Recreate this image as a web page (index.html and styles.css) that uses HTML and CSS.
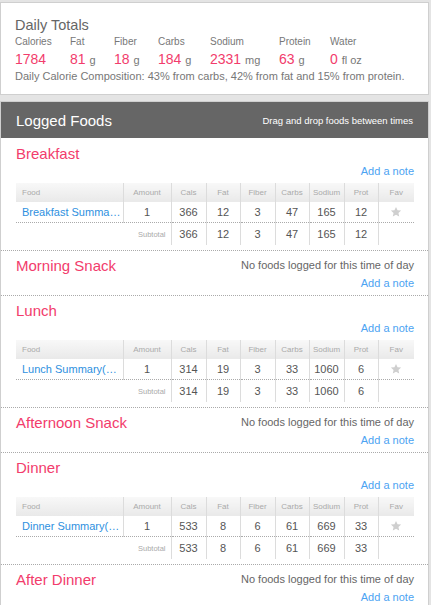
FILE: index.html
```html
<!DOCTYPE html>
<html>
<head>
<meta charset="utf-8">
<link rel="stylesheet" href="styles.css">
</head>
<body>
<div class="panel totals">
  <div class="totals-title">Daily Totals</div>
  <div class="totals-grid">
    <div class="lbl">Calories</div><div class="lbl">Fat</div><div class="lbl">Fiber</div><div class="lbl">Carbs</div><div class="lbl">Sodium</div><div class="lbl">Protein</div><div class="lbl">Water</div>
    <div class="val">1784</div>
    <div class="val">81 <span class="unit">g</span></div>
    <div class="val">18 <span class="unit">g</span></div>
    <div class="val">184 <span class="unit">g</span></div>
    <div class="val">2331 <span class="unit">mg</span></div>
    <div class="val">63 <span class="unit">g</span></div>
    <div class="val">0 <span class="unit">fl oz</span></div>
  </div>
  <div class="composition">Daily Calorie Composition: 43% from carbs, 42% from fat and 15% from protein.</div>
</div>

<div class="panel logged">
  <div class="logged-head">
    <span class="logged-title">Logged Foods</span>
    <span class="logged-hint">Drag and drop foods between times</span>
  </div>

  <div class="meal first">
    <div class="meal-row"><span class="meal-name">Breakfast</span></div>
    <div class="note">Add a note</div>
    <table class="foods">
      <colgroup><col class="c-food"><col class="c-amt"><col class="c-n"><col class="c-n2"><col class="c-n"><col class="c-n2"><col class="c-n"><col class="c-n2"><col class="c-fav"></colgroup>
      <tr class="hd"><th class="food">Food</th><th>Amount</th><th>Cals</th><th>Fat</th><th>Fiber</th><th>Carbs</th><th>Sodium</th><th>Prot</th><th>Fav</th></tr>
      <tr class="item"><td class="food"><span class="fname">Breakfast Summa…</span></td><td>1</td><td>366</td><td>12</td><td>3</td><td>47</td><td>165</td><td>12</td><td><svg class="star" viewBox="0 0 24 24"><path d="M12 1.8l3.1 6.6 7.2.8-5.4 4.9 1.5 7.1L12 17.6l-6.4 3.6 1.5-7.1-5.4-4.9 7.2-.8z"/></svg></td></tr>
      <tr class="sub"><td class="blank"></td><td class="sublbl">Subtotal</td><td>366</td><td>12</td><td>3</td><td>47</td><td>165</td><td>12</td><td></td></tr>
    </table>
  </div>

  <div class="meal empty">
    <div class="meal-row"><span class="meal-name">Morning Snack</span><span class="none">No foods logged for this time of day</span></div>
    <div class="note">Add a note</div>
  </div>

  <div class="meal">
    <div class="meal-row"><span class="meal-name">Lunch</span></div>
    <div class="note">Add a note</div>
    <table class="foods">
      <colgroup><col class="c-food"><col class="c-amt"><col class="c-n"><col class="c-n2"><col class="c-n"><col class="c-n2"><col class="c-n"><col class="c-n2"><col class="c-fav"></colgroup>
      <tr class="hd"><th class="food">Food</th><th>Amount</th><th>Cals</th><th>Fat</th><th>Fiber</th><th>Carbs</th><th>Sodium</th><th>Prot</th><th>Fav</th></tr>
      <tr class="item"><td class="food"><span class="fname">Lunch Summary(…</span></td><td>1</td><td>314</td><td>19</td><td>3</td><td>33</td><td>1060</td><td>6</td><td><svg class="star" viewBox="0 0 24 24"><path d="M12 1.8l3.1 6.6 7.2.8-5.4 4.9 1.5 7.1L12 17.6l-6.4 3.6 1.5-7.1-5.4-4.9 7.2-.8z"/></svg></td></tr>
      <tr class="sub"><td class="blank"></td><td class="sublbl">Subtotal</td><td>314</td><td>19</td><td>3</td><td>33</td><td>1060</td><td>6</td><td></td></tr>
    </table>
  </div>

  <div class="meal empty">
    <div class="meal-row"><span class="meal-name">Afternoon Snack</span><span class="none">No foods logged for this time of day</span></div>
    <div class="note">Add a note</div>
  </div>

  <div class="meal">
    <div class="meal-row"><span class="meal-name">Dinner</span></div>
    <div class="note">Add a note</div>
    <table class="foods">
      <colgroup><col class="c-food"><col class="c-amt"><col class="c-n"><col class="c-n2"><col class="c-n"><col class="c-n2"><col class="c-n"><col class="c-n2"><col class="c-fav"></colgroup>
      <tr class="hd"><th class="food">Food</th><th>Amount</th><th>Cals</th><th>Fat</th><th>Fiber</th><th>Carbs</th><th>Sodium</th><th>Prot</th><th>Fav</th></tr>
      <tr class="item"><td class="food"><span class="fname">Dinner Summary(…</span></td><td>1</td><td>533</td><td>8</td><td>6</td><td>61</td><td>669</td><td>33</td><td><svg class="star" viewBox="0 0 24 24"><path d="M12 1.8l3.1 6.6 7.2.8-5.4 4.9 1.5 7.1L12 17.6l-6.4 3.6 1.5-7.1-5.4-4.9 7.2-.8z"/></svg></td></tr>
      <tr class="sub"><td class="blank"></td><td class="sublbl">Subtotal</td><td>533</td><td>8</td><td>6</td><td>61</td><td>669</td><td>33</td><td></td></tr>
    </table>
  </div>

  <div class="meal empty">
    <div class="meal-row"><span class="meal-name">After Dinner</span><span class="none">No foods logged for this time of day</span></div>
    <div class="note">Add a note</div>
  </div>
</div>
</body>
</html>
```

FILE: styles.css
```css
html, body {
  margin: 0;
  padding: 0;
}
body {
  background: #e4e4e4;
  font-family: "Liberation Sans", Arial, sans-serif;
  color: #666;
  padding-top: 2px;
  overflow: hidden;
}
.panel {
  background: #fff;
  border: 1px solid #cfcfcf;
  margin-right: 2px;
}
.totals {
  padding: 13px 14px 11px 14px;
}
.totals-title {
  font-size: 14.5px;
  line-height: 19px;
  color: #666;
}
.totals-grid {
  display: grid;
  grid-template-columns: 55px 44px 44px 52px 69px 51px auto;
}
.lbl {
  font-size: 10px;
  line-height: 14px;
  color: #777;
}
.val {
  font-size: 14px;
  line-height: 18px;
  color: #f23c6c;
  margin-top: 1px;
  white-space: nowrap;
}
.unit {
  font-size: 11px;
  color: #777;
}
.composition {
  font-size: 11px;
  line-height: 14px;
  color: #777;
}
.logged {
  margin-top: 6px;
}
.logged-head {
  background: #666;
  height: 36px;
  display: flex;
  align-items: center;
  justify-content: space-between;
  padding: 0 15px 0 15px;
}
.logged-title {
  color: #fff;
  font-size: 15px;
}
.logged-hint {
  color: #fff;
  font-size: 9.5px;
}
.meal {
  padding: 4px 14px 5px 15px;
  border-top: 1px dotted #aaa;
}
.meal.first {
  border-top: none;
  padding-top: 5px;
}
.meal.empty {
  padding-bottom: 4px;
}
.meal-row {
  display: flex;
  justify-content: space-between;
  align-items: center;
  height: 20px;
}
.meal-name {
  font-size: 15px;
  color: #f23c6c;
}
.none {
  font-size: 11px;
  color: #666;
}
.note {
  text-align: right;
  font-size: 11px;
  line-height: 16px;
  color: #4ca3f2;
}
.foods {
  margin-top: 4px;
  width: 398px;
  border-collapse: collapse;
  table-layout: fixed;
}
.c-food { width: 107px; }
.c-amt { width: 48px; }
.c-n { width: 35px; }
.c-n2 { width: 34px; }
.c-fav { width: 36px; }
.foods th {
  height: 19px;
  padding: 0;
  font-size: 8px;
  font-weight: normal;
  color: #aaa;
  text-align: center;
  background: linear-gradient(#f8f8f8, #e9e9e9);
  border-left: 1px solid #dcdcdc;
}
.foods th.food {
  text-align: left;
  padding-left: 6px;
  border-left: none;
}
.foods td {
  padding: 0;
  font-size: 11px;
  color: #555;
  text-align: center;
  border-left: 1px solid #dcdcdc;
}
.item td {
  height: 20px;
  border-bottom: 1px dotted #aaa;
}
.item td.food {
  text-align: left;
  padding-left: 6px;
  border-left: none;
  border-right: 1px solid #dcdcdc;
}
.fname {
  color: #2e90e0;
  white-space: nowrap;
}
.sub td {
  height: 22px;
}
.sub td.blank {
  border-left: none;
}
.sub td.sublbl {
  border-left: none;
  font-size: 7.5px;
  color: #aaa;
  text-align: right;
  padding-right: 5px;
}
.star {
  width: 12px;
  height: 12px;
  fill: #cfcfcf;
  display: block;
  margin: 0 auto;
}
```
